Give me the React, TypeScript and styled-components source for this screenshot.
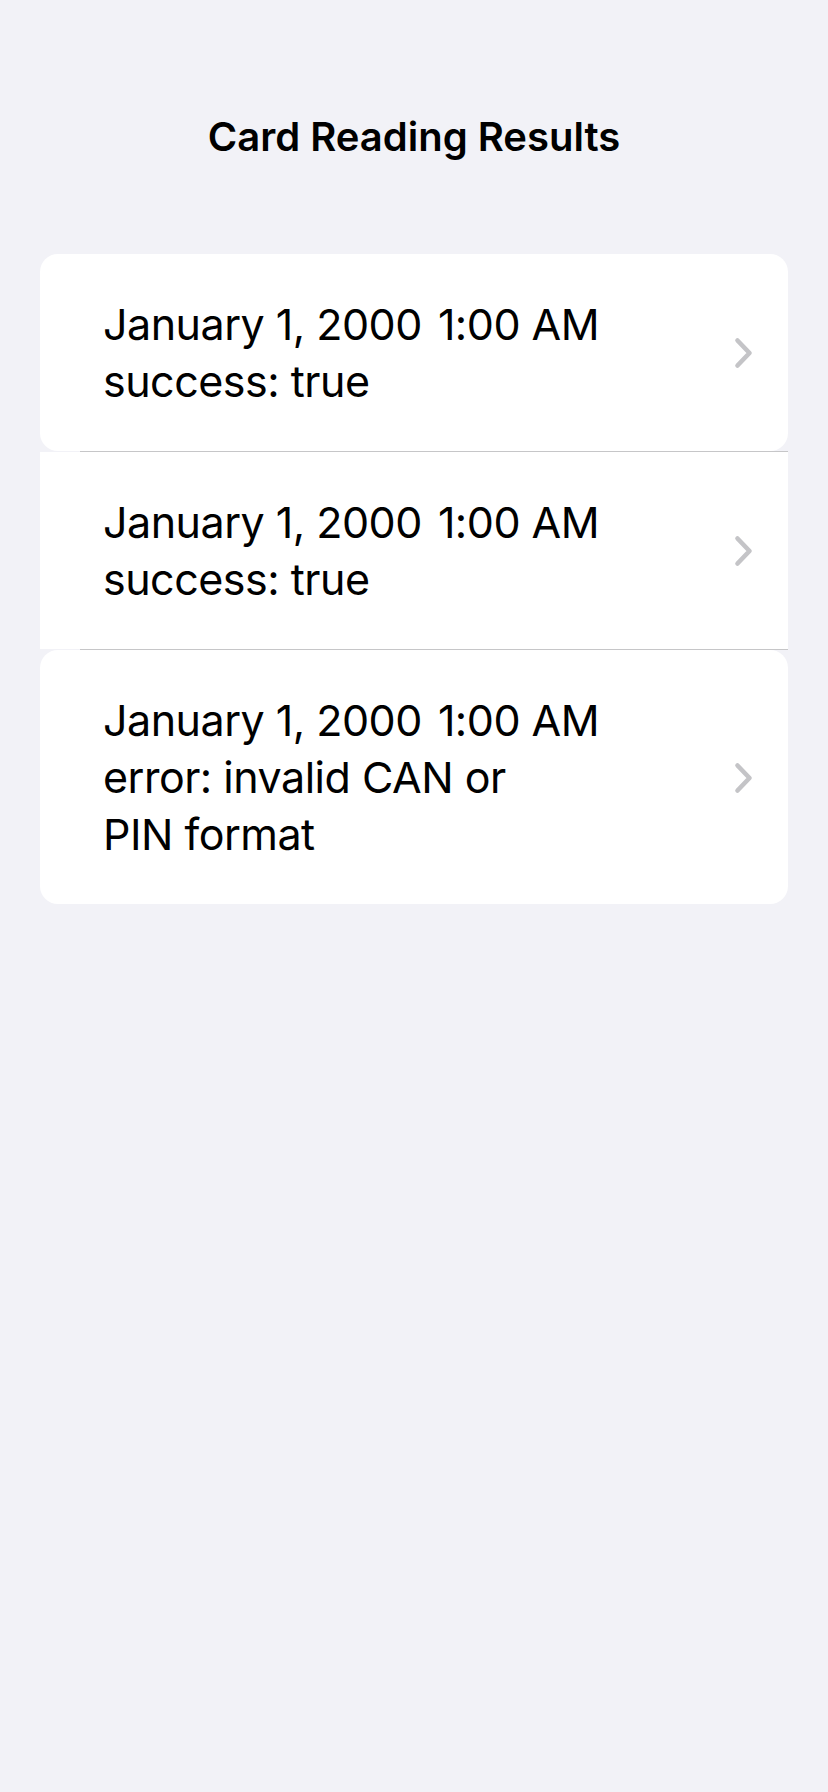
import React from "react";
import styled, { createGlobalStyle } from "styled-components";

const GlobalStyle = createGlobalStyle`
  html, body {
    margin: 0;
    padding: 0;
    background: #f2f2f7;
  }
  body {
    font-family: Inter, "Noto Sans", "Liberation Sans", sans-serif;
    color: #000;
    -webkit-font-smoothing: antialiased;
  }
`;

const Page = styled.div`
  min-height: 1792px;
  background: #f2f2f7;
  padding-top: 113px;
  box-sizing: border-box;
`;

const Title = styled.h1`
  margin: 0;
  text-align: center;
  font-size: 40px;
  line-height: 48px;
  font-weight: 600;
  letter-spacing: 0;
`;

const List = styled.div`
  margin: 93px 40px 0;
  display: flex;
  flex-direction: column;
`;

const Row = styled.div<{ $rounded: boolean }>`
  display: flex;
  align-items: center;
  background: #fff;
  padding: 42px 35px 41px 63px;
  border-radius: ${(p) => (p.$rounded ? "18px" : "0")};
`;

const Texts = styled.div`
  flex: 1;
  display: flex;
  flex-direction: column;
  font-size: 43px;
  line-height: 57px;
  font-weight: 400;
  letter-spacing: -0.5px;
`;

const DateLine = styled.div`
  display: flex;
  gap: 16px;
`;

const Separator = styled.div`
  height: 1px;
  margin-left: 40px;
  background: #c6c6c8;
`;

const Chevron = () => (
  <svg width="19" height="32" viewBox="0 0 19 32" fill="none">
    <polyline
      points="3.5,3.5 15.5,16 3.5,28.5"
      stroke="#c4c4c7"
      strokeWidth="4.6"
      strokeLinecap="round"
      strokeLinejoin="round"
    />
  </svg>
);

const rows = [
  { lines: ["success: true"] },
  { lines: ["success: true"] },
  { lines: ["error: invalid CAN or", "PIN format"] },
];

export default function App() {
  return (
    <>
      <GlobalStyle />
      <Page>
        <Title>Card Reading Results</Title>
        <List>
          {rows.map((r, i) => (
            <React.Fragment key={i}>
              {i > 0 && <Separator />}
              <Row $rounded={i !== 1}>
                <Texts>
                  <DateLine>
                    <span>January 1, 2000</span>
                    <span>1:00 AM</span>
                  </DateLine>
                  {r.lines.map((l) => (
                    <div key={l}>{l}</div>
                  ))}
                </Texts>
                <Chevron />
              </Row>
            </React.Fragment>
          ))}
        </List>
      </Page>
    </>
  );
}
